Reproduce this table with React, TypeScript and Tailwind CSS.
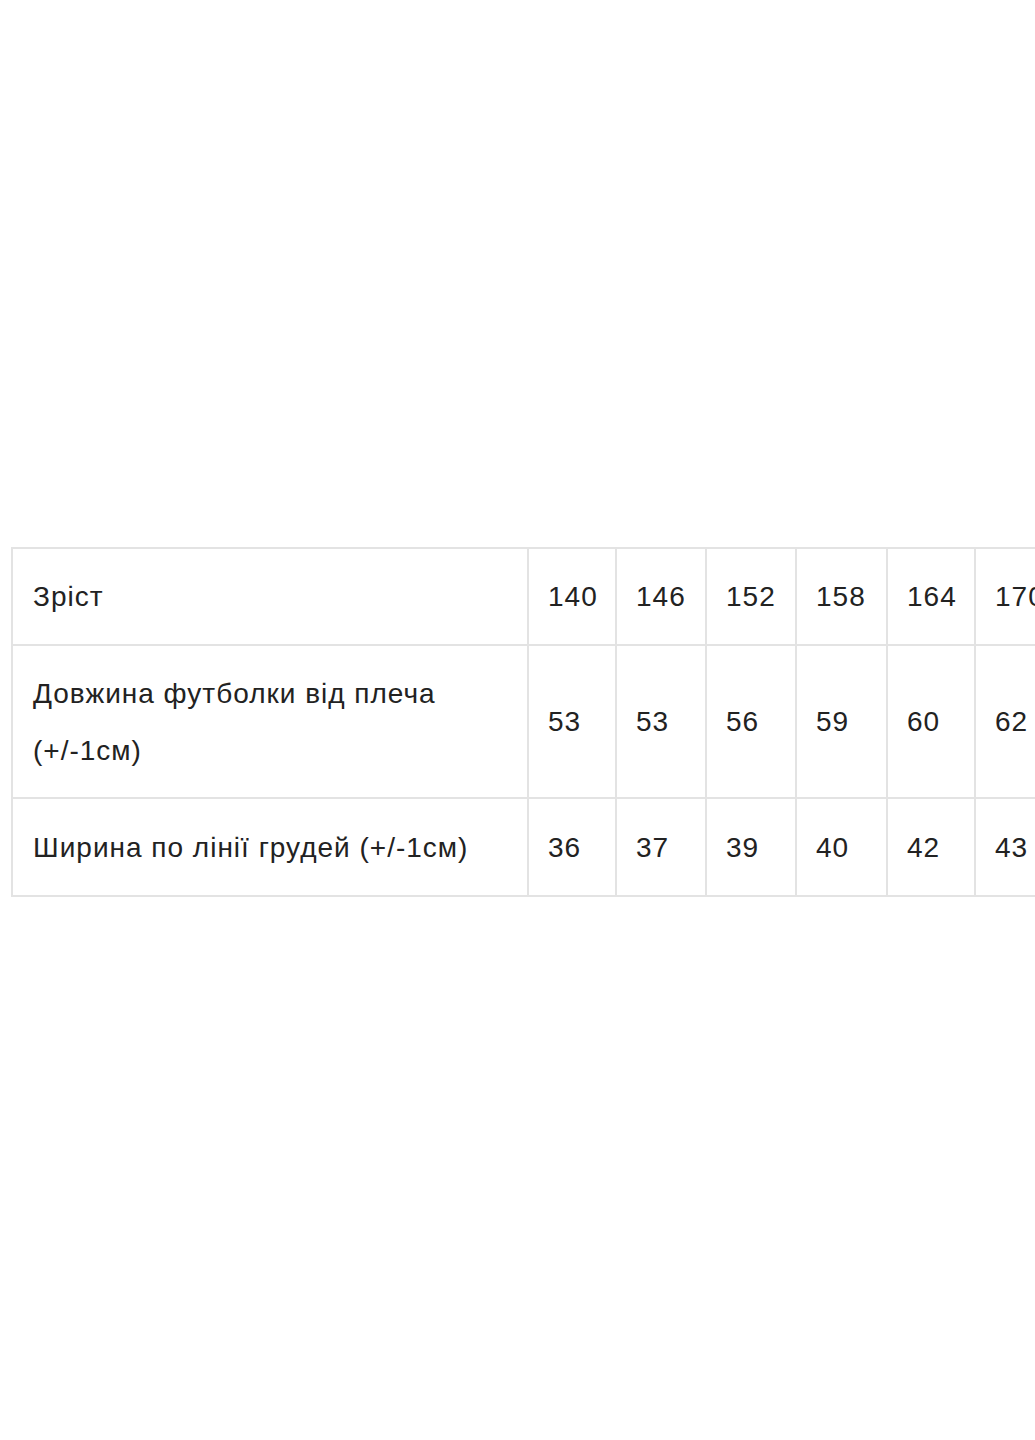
const heights = ["140", "146", "152", "158", "164", "170"];
const lengths = ["53", "53", "56", "59", "60", "62"];
const widths = ["36", "37", "39", "40", "42", "43"];
const colW = ["w-[88px]", "w-[90px]", "w-[90px]", "w-[91px]", "w-[88px]", "w-[90px]"];

const rows = [
  { label: "Зріст", values: heights, h: "h-[97px]" },
  { label: "Довжина футболки від плеча (+/-1см)", values: lengths, h: "h-[153px]" },
  { label: "Ширина по лінії грудей (+/-1см)", values: widths, h: "h-[98px]" },
];

export default function App() {
  return (
    <div
      className="w-[1035px] h-[1440px] overflow-hidden bg-white pt-[547px] pl-[11px] text-[#222]"
      style={{ fontFamily: '"Liberation Sans", Arial, sans-serif' }}
    >
      <table className="w-[1053px] min-w-[1053px] border-collapse table-fixed text-[28px] leading-[57px] tracking-[1px]">
        <colgroup>
          <col className="w-[516px]" />
          {colW.map((w, i) => (
            <col key={i} className={w} />
          ))}
        </colgroup>
        <tbody>
          {rows.map((row) => (
            <tr key={row.label} className={row.h}>
              <td className="border-2 border-[#e3e3e3] pl-[20px] pr-[20px] align-middle">
                {row.label}
              </td>
              {row.values.map((v, i) => (
                <td key={i} className="border-2 border-[#e3e3e3] pl-[19px] align-middle whitespace-nowrap">
                  {v}
                </td>
              ))}
            </tr>
          ))}
        </tbody>
      </table>
    </div>
  );
}
